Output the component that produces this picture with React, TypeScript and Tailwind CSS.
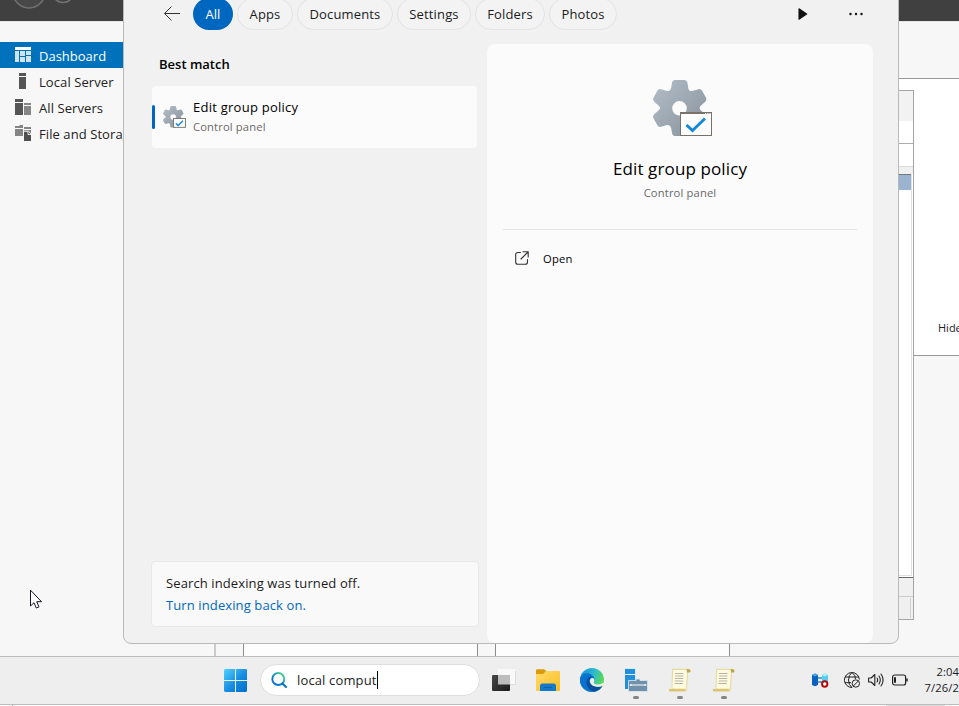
import React from "react";

function Gear({ className, check, id }: { className: string; check: string; id: string }) {
  return (
    <svg className={className} viewBox="0 0 60 57">
      <defs>
        <linearGradient id={id} x1="0" y1="0" x2="1" y2="1">
          <stop offset="0" stopColor="#b4bec8" />
          <stop offset="1" stopColor="#87919c" />
        </linearGradient>
      </defs>
      <path
        fill={`url(#${id})`}
        fillRule="evenodd"
        d="M22 0H31Q34 0 34.5 3L35.3 8.500Q35.800 11.500 39 11L45.500 9.200Q48 8.700 49.300 11L53 17.800Q54 20.200 52 22L47.500 26Q45.800 28 47.500 30L52 34Q54 36 53 38.200L49.300 45Q48 47.300 45.500 46.800L39 45Q35.800 44.500 35.300 47.500L34.500 53Q34 56 31 56H22Q19.500 56 19 53L18 47.500Q17.200 44.500 14 45L8 46.800Q5.500 47.300 4.200 45L.500 38.200Q-.500 36 1.500 34L6 30Q8 28 6 26L1.500 22Q-.500 20.200 .500 17.800L4.200 11Q5.500 8.700 8 9.200L14 11Q17.200 11.500 18 8.500L19 3Q19.500 0 22 0ZM26.500 21A7.300 7.300 0 1 0 26.500 35.600A7.300 7.300 0 1 0 26.500 21Z"
      />
      <rect x="27.500" y="32.500" width="31" height="23" fill="#fdfdfd" stroke="#77736b" strokeWidth={check === "big" ? 1 : 2.400} />
      {check === "big" && <path d="M27 33H59" stroke="#77736b" strokeWidth="2" />}
      {check === "big" && <path d="M52 33.500h1.200M54.300 33.500h1.200M56.500 33.500h1.200" stroke="#fff" strokeWidth="1" />}
      <path d="M33.500 45L39.500 50.500L52 38.500" fill="none" stroke="#1486dc" strokeWidth={check === "big" ? 2.900 : 3.600} />
    </svg>
  );
}

const filters = [
  { label: "Apps", cls: "w-14" },
  { label: "Documents", cls: "w-24" },
  { label: "Settings", cls: "w-[74px]" },
  { label: "Folders", cls: "w-[70px]" },
  { label: "Photos", cls: "w-[68px]" },
];

function Sidebar() {
  const row = "flex h-[26px] items-center pl-[15px] gap-2 whitespace-nowrap text-[13px] tracking-[0.08px] text-[#222]";
  return (
    <div className="w-[216px] shrink-0 border-r-2 border-[#cbcbcb] bg-[#f7f7f7] pt-5">
      <div className="flex h-[26px] items-center gap-2 bg-[#0072bc] pl-[15px] text-[13px] text-white">
        <svg className="size-4 -translate-y-px" viewBox="0 0 16 16">
          <path fill="#fff" d="M0 1h16v3H0z" />
          <path fill="#cfe3f1" d="M0 5h4v11H0zM5 5h5v5H5zM11 5h5v4h-5zM5 11h5v5H5zM11 10h5v6h-5z" />
        </svg>
        <span className="pt-1">Dashboard</span>
      </div>
      <div className={row}>
        <svg className="size-4" viewBox="0 0 16 16">
          <path fill="#555" d="M4 0h7v3H4zM4 4h7v12H4z" />
        </svg>
        <span className="pt-1">Local Server</span>
      </div>
      <div className={row}>
        <svg className="size-4" viewBox="0 0 16 16">
          <path fill="#555" d="M0 0h8v3H0zM0 4h8v12H0z" />
          <path fill="#858585" d="M9 4h7v2H9zM9 7h7v9H9z" />
        </svg>
        <span className="pt-1">All Servers</span>
      </div>
      <div className={row}>
        <svg className="size-4" viewBox="0 0 16 16">
          <path fill="#858585" d="M0 1h4l1-1h3v3H0zM0 4h8v7H0zM9 2h7v2H9zM9 5h7v7H9z" />
          <path fill="#505050" d="M9 6.500h4.500L16 9v7H9z" />
          <path fill="none" stroke="#f7f7f7" d="M8.500 12V6.300h5L16 9M13 6.500v3h3" strokeWidth=".9" />
        </svg>
        <span className="pt-1">File and Storage Services</span>
      </div>
    </div>
  );
}

function ServerManager() {
  return (
    <div className="flex h-[656px] flex-col bg-[#f7f7f7]">
      <div className="h-[21px] shrink-0 bg-[#404040]">
        <svg className="block" width="120" height="21" viewBox="0 0 120 21">
          <circle cx="29" cy="-8" r="16" fill="#484848" stroke="#737373" strokeWidth="1.500" />
          <circle cx="63" cy="-8" r="10.500" fill="none" stroke="#737373" strokeWidth="1.500" />
        </svg>
      </div>
      <div className="flex flex-1 border-t border-[#e5e5e5]">
        <Sidebar />
        <div className="flex flex-1 flex-col pl-[27px] pt-14">
          <div className="flex h-[278px] items-end justify-end border-y border-[#999] bg-white pb-[19px]">
            <span className="-mr-[2px] w-[23px] text-[11px] leading-4 text-[#222]">Hide</span>
          </div>
          <div className="flex flex-1 gap-[17px] pt-4">
            <div className="w-[235px] border border-b-0 border-[#8c8c8c] bg-[#fdfdfd]" />
            <div className="w-[235px] border border-b-0 border-[#8c8c8c] bg-[#fdfdfd]" />
          </div>
        </div>
      </div>
    </div>
  );
}

function BackWindow() {
  return (
    <div className="absolute left-[300px] top-[90px] flex h-[530px] w-[614px] flex-col border border-[#a5a5a5] bg-white">
      <div className="h-[30px] bg-[#f2f2f2]" />
      <div className="h-[23px] border-b border-[#adadad]" />
      <div className="h-[22px]" />
      <div className="h-2 border-t border-[#dcdcdc] bg-[#f0f0f0]" />
      <div className="mr-px flex h-[402px] flex-col border-b border-r border-[#e0e0e0]">
        <div className="h-4 border-t border-[#777] bg-[#9ab3d1]" />
      </div>
      <div className="mt-px h-5 border-b border-t border-b-[#ccc] border-t-[#656a6a] bg-[#f0f0f0]" />
      <div className="flex-1 bg-[#f0f0f0] pr-[2px] pt-px">
        <div className="h-5 border-r border-[#d0d0d0]" />
      </div>
    </div>
  );
}

function SearchPanel() {
  return (
    <div className="absolute -top-3 left-[123px] flex h-[656px] w-[776px] flex-col gap-[14px] overflow-hidden rounded-lg border border-[#b9b9b9] bg-[#f1f1f1] pt-[9px] text-[#1b1b1b]">
      <div className="flex h-8 shrink-0 items-center gap-1 pl-10 text-[13px]">
        <svg className="mr-[9px] h-4 w-4" viewBox="0 0 16 16" fill="none" stroke="#333" strokeWidth="1">
          <path d="M16 7.500H.700M7.500.500L.500 7.500L7.500 14.500" />
        </svg>
        <div className="flex h-8 w-10 items-center justify-center rounded-full bg-[#0067c0] pt-px text-white">All</div>
        {filters.map((f) => (
          <div key={f.label} className={`${f.cls} flex h-8 items-center justify-center rounded-full border border-[#e3e3e3] bg-[#f3f3f3] pt-px tracking-[0.15px]`}>
            {f.label}
          </div>
        ))}
        <svg className="ml-[177px] h-3 w-[10px]" viewBox="0 0 10 12">
          <path d="M1.200 1L8.500 6L1.200 11Z" fill="#111" stroke="#111" strokeWidth="1.500" strokeLinejoin="round" />
        </svg>
        <svg className="ml-[37px] h-[4px] w-[14px]" viewBox="0 0 14 4" fill="#111">
          <circle cx="1.500" cy="2" r="1.200" />
          <circle cx="7" cy="2" r="1.200" />
          <circle cx="12.500" cy="2" r="1.200" />
        </svg>
      </div>
      <div className="flex flex-1 pl-7">
        <div className="flex w-[335px] flex-col">
          <div className="h-[42px] pl-[7px] pt-[10px] text-[13px] font-semibold leading-5 text-black">Best match</div>
          <div className="flex h-[62px] w-[325px] items-center rounded bg-[#fbfbfb]">
            <div className="h-6 w-[3px] rounded-full bg-[#0067c0]" />
            <Gear className="ml-2 h-[22px] w-[23px]" check="small" id="gs" />
            <div className="ml-[7px]">
              <div className="-mt-px mb-px text-[13px] leading-5 tracking-[0.25px] text-black">Edit group policy</div>
              <div className="text-[11.2px] leading-[18px] tracking-[0.15px] text-[#6a6a6a]">Control panel</div>
            </div>
          </div>
          <div className="-ml-px mb-4 mt-auto h-[66px] w-[328px] rounded border border-[#e8e8e8] bg-[#f9f9f9] pl-[14px] pt-[10px] text-[13px] leading-[22px] tracking-[0.11px]">
            <div>Search indexing was turned off.</div>
            <div className="text-[#0067c0]">Turn indexing back on.</div>
          </div>
        </div>
        <div className="flex w-[386px] flex-col items-center rounded-lg bg-[#fbfbfb] px-4 pt-9">
          <Gear className="ml-[6px] h-[57px] w-[60px]" check="big" id="gb" />
          <div className="mt-[18px] text-[17px] leading-7 tracking-[0.12px] text-black">Edit group policy</div>
          <div className="mt-px text-[11.2px] leading-[18px] tracking-[0.15px] text-[#6a6a6a]">Control panel</div>
          <div className="mt-[27px] h-px w-full bg-[#e5e5e5]" />
          <div className="mt-5 flex w-full items-center gap-[14px] pl-3">
            <svg className="mb-[2px] size-[14px]" viewBox="0 0 14 14" fill="none" stroke="#333" strokeWidth="1.100" strokeLinecap="round">
              <path d="M5.500 1.500H3Q.700 1.500 .700 3.800V11Q.700 13.300 3 13.300H10.200Q12.500 13.300 12.500 11V8.500M8 .700H13.200V6M13 1L6 8" />
            </svg>
            <span className="text-[11.2px] leading-[18px] tracking-[0.25px] text-black">Open</span>
          </div>
        </div>
      </div>
    </div>
  );
}

function Scroll() {
  return (
    <svg className="h-6 w-6" viewBox="0 0 24 24">
      <path d="M4.500 1.300H21Q22.500 1.300 22.500 3Q22.500 4.300 20.500 4.300H19.500L18.500 22Q18.300 23 16.500 23H2Q1 23 1.300 21.500H4Z" fill="#f7edbe" stroke="#e0cf8c" strokeWidth=".700" />
      <path d="M5.500 2H19L17.500 20H4.500Z" fill="#fffbe1" />
      <path d="M18.500 1.200H21Q23 2 22 4.300L19 4.500Z" fill="#bca552" />
      <path d="M1 21H16L18.300 22.600Q17 23.400 15 23.200H1.500Q.600 22 1 21Z" fill="#d9c574" />
      <path d="M7 5.500h8.500M7 8h8.500M6.800 10.500h8.500M6.800 13h8.500M6.500 15.500h8.500" stroke="#b5b3a4" strokeWidth="1" />
    </svg>
  );
}

function Taskbar() {
  return (
    <div className="relative flex h-[49px] items-center border-y border-[#bdbdbd] bg-[#eee] pb-px pl-[224px]">
      <svg className="mt-px size-[23px]" viewBox="0 0 23 23">
        <defs>
          <linearGradient id="win" gradientUnits="userSpaceOnUse" x1="0" y1="0" x2="23" y2="23">
            <stop offset="0" stopColor="#4fd0ff" />
            <stop offset=".55" stopColor="#168cdf" />
            <stop offset="1" stopColor="#006fca" />
          </linearGradient>
        </defs>
        <path fill="url(#win)" d="M1 0H11V11H0V1ZM12 0H22L23 1V11H12ZM0 12H11V23H1L0 22ZM12 12H23V22L22 23H12Z" />
      </svg>
      <div className="ml-[13px] flex h-8 w-[220px] items-center rounded-full border border-[#dedede] bg-white pl-[10px]">
        <svg className="size-4" viewBox="0 0 16 16" fill="none">
          <defs>
            <linearGradient id="mag" x1="0" y1="1" x2="1" y2="0">
              <stop offset=".3" stopColor="#0a77cf" />
              <stop offset=".65" stopColor="#25b0b5" />
              <stop offset="1" stopColor="#60da79" />
            </linearGradient>
          </defs>
          <circle cx="7.300" cy="7" r="6" stroke="url(#mag)" strokeWidth="1.900" />
          <path d="M11.500 11.500L15 15" stroke="#0a6fc4" strokeWidth="2" strokeLinecap="round" />
        </svg>
        <span className="ml-[10px] text-[13px] leading-5 tracking-[0.14px] text-[#222]">local comput</span>
        <span className="h-[18px] w-px bg-black" />
      </div>
      <div className="ml-3 flex items-center gap-5">
        <svg className="size-6" viewBox="0 0 24 24">
          <defs>
            <linearGradient id="tv" x1="0" y1="0" x2="1" y2="1">
              <stop offset="0" stopColor="#474747" />
              <stop offset="1" stopColor="#1b1b1b" />
            </linearGradient>
          </defs>
          <rect x="6" y="1" width="18" height="16" rx="1" fill="#f9f9f9" />
          <path d="M6.500 16.500H23.500V3" fill="none" stroke="#dcdcdc" />
          <rect x="0" y="7" width="18" height="16" rx="1" fill="url(#tv)" />
          <path d="M6 7H18V16.500H6Z" fill="#bdbdbd" />
        </svg>
        <svg className="size-6" viewBox="0 0 24 24">
          <defs>
            <linearGradient id="fo" x1="0" y1="0" x2="1" y2="1">
              <stop offset="0" stopColor="#ffdb6d" />
              <stop offset="1" stopColor="#fbbd20" />
            </linearGradient>
          </defs>
          <path d="M0 2.500Q0 1.300 1.200 1.300H8L10 2.800V6H0Z" fill="#dc9909" />
          <path d="M0 6H7L10 3H23Q24 3 24 4V22Q24 23 23 23H1Q0 23 0 22Z" fill="url(#fo)" />
          <path d="M4 23V18Q4 15.500 6.500 15.500H17.500Q20 15.500 20 18V23Z" fill="#1479ca" />
          <path d="M8 19.500H16" stroke="#0c5fa9" />
        </svg>
        <svg className="size-6" viewBox="0 0 24 24">
          <defs>
            <linearGradient id="ed" x1="0" y1=".2" x2="1" y2=".6">
              <stop offset="0" stopColor="#168edc" />
              <stop offset=".5" stopColor="#2dbad0" />
              <stop offset="1" stopColor="#63df43" />
            </linearGradient>
          </defs>
          <circle cx="12" cy="12" r="12" fill="url(#ed)" />
          <path d="M0 10C2 5 8 4 12 7Q15 9 14.500 12Q12 9 9.500 12C8 16 12 20 17 20Q20 20 22.500 18Q19 24 12 24C4 24 -1 17 0 10Z" fill="#0872cf" />
          <path d="M8 10C4 15 8 22 14 23.500Q20 22 22.500 18Q18 20 14 18Q9 16 9.500 12Q10 10 12 9Q10 8 8 10Z" fill="#0b4d9b" />
          <path d="M10 13Q10 10 12.200 10Q14.800 10 14.200 13C13 15 15 16.800 18 16.600Q21 16.500 23.500 14.500V17Q22 18.500 19 18.700C13 19 10 16 10 13Z" fill="#eee" />
        </svg>
        <svg className="size-6" viewBox="0 0 24 24">
          <path d="M1 1H11V6H1ZM1 7H11V21H1Z" fill="#2190dc" />
          <path d="M0 .500H11.500V12" fill="none" stroke="#cce6f6" strokeWidth=".700" />
          <path d="M8 12.500H12V11H16V12.500H23.500V23.500H4.500V12.500Z" fill="#6f91a9" stroke="#dce9f0" strokeWidth=".800" />
          <path d="M5.500 17H22.500" stroke="#fff" />
          <path d="M7 16v2M21 16v2" stroke="#fff" />
        </svg>
        <Scroll />
        <Scroll />
      </div>
      <div className="ml-[76px] flex items-center">
        <svg className="h-4 w-[17px]" viewBox="0 0 17 16">
          <path d="M0 3L3 1.500L6 3V13L3 14.200L0 13Z" fill="#0862bd" />
          <path d="M0 3L3 1.500L6 3L3 4.500Z" fill="#4ba6ea" />
          <path d="M10 3L13 1.500L16 3V12H10Z" fill="#55cdf1" />
          <path d="M10 3L13 1.500L16 3L13 4.500Z" fill="#aaf3fa" />
          <path d="M6 6H10M6 10H10" stroke="#278ed5" strokeWidth="1.600" />
          <circle cx="12.700" cy="12" r="2.700" fill="#fff" stroke="#b80808" strokeWidth="1.900" />
        </svg>
        <svg className="ml-[15px] size-4" viewBox="0 0 16 16" fill="none" stroke="#222" strokeWidth="1">
          <path d="M8 15.500A7.500 7.500 0 1 1 15.400 7.500M1 5H15M1 10.700H7M8 .500Q4.500 3 4.500 8Q4.500 13 8 15.500M8 .500Q11.500 3 11.500 7" />
          <circle cx="11.800" cy="11.500" r="3.700" fill="#eee" />
          <path d="M9.200 14L14.400 9" />
        </svg>
        <svg className="ml-2 size-4" viewBox="0 0 16 16" fill="none" stroke="#222" strokeWidth="1.100" strokeLinejoin="round" strokeLinecap="round">
          <path d="M.600 6H3.200L6.800 2.500V13.500L3.200 10H.600ZM9 6Q10.300 8 9 10M11 4Q13.600 8 11 12M13 2Q17.200 8 13 14" />
        </svg>
        <svg className="ml-2 h-4 w-4" viewBox="0 0 16 16" fill="none" stroke="#222">
          <rect x=".600" y="3" width="13" height="10" rx="2" strokeWidth="1.200" />
          <path d="M15 6.500V9.500" strokeWidth="1.500" />
          <path d="M3 5.300V10.700" strokeWidth="2" />
        </svg>
        <div className="ml-4 w-[35px] whitespace-nowrap text-right text-[11.2px] leading-4 tracking-[0.1px] text-[#1b1b1b]">
          <div>2:04</div>
          <div>7/26/2</div>
        </div>
      </div>
      <div className="absolute left-[633px] top-[39px] flex gap-[38px]">
        <div className="h-[3px] w-[6px] rounded-full bg-[#858585]" />
        <div className="h-[3px] w-[6px] rounded-full bg-[#858585]" />
        <div className="h-[3px] w-[6px] rounded-full bg-[#858585]" />
      </div>
    </div>
  );
}

export default function App() {
  return (
    <div className="relative h-[706px] w-[959px] overflow-hidden bg-white font-['Open_Sans','Noto_Sans',sans-serif]">
      <ServerManager />
      <BackWindow />
      <SearchPanel />
      <Taskbar />
      <div className="flex h-px bg-[#f8f8f8]">
        <div className="ml-3 w-px bg-[#aaa]" />
        <div className="ml-[873px] w-[59px] bg-[#ddd]" />
      </div>
      <svg className="absolute left-[30px] top-[589px] h-5 w-3" viewBox="0 0 12 20">
        <path d="M.500 1.200V17L4 13.700L6.300 19L9 17.900L6.700 12.700H11.500Z" fill="#fff" stroke="#151525" strokeWidth="1" />
      </svg>
    </div>
  );
}
